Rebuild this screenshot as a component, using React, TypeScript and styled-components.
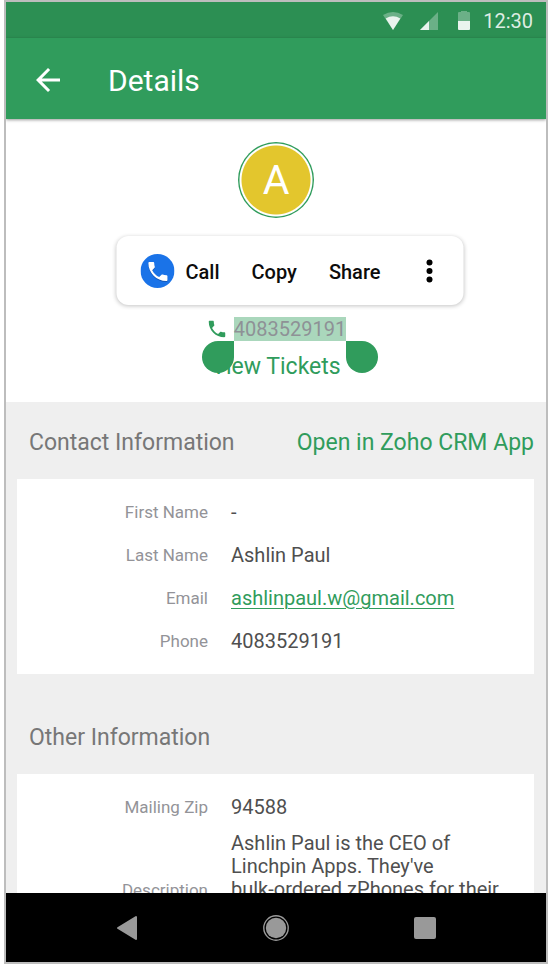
import React from "react";
import styled, { createGlobalStyle } from "styled-components";

const green = "#309c5c";

const GlobalStyle = createGlobalStyle`
  * { box-sizing: border-box; }
  body {
    margin: 0;
    background: #fff;
    font-family: Roboto, "Liberation Sans", sans-serif;
  }
  button {
    font: inherit;
    color: inherit;
    background: none;
    border: 0;
    padding: 0;
    cursor: pointer;
  }
  svg { display: block; }
`;

const Screen = styled.div`
  display: flex;
  flex-direction: column;
  height: calc(100vh - 2px);
  margin: 0 2px 2px 4px;
  border: 2px solid #bdbdbd;
  overflow: hidden;
`;

const StatusBar = styled.div`
  flex: none;
  display: flex;
  align-items: center;
  justify-content: flex-end;
  height: 36px;
  padding: 2px 13px 0 0;
  background: #2c8f53;
  color: rgba(255, 255, 255, 0.85);
  font-size: 20px;
`;

const StatusIcons = styled.div`
  display: flex;
  gap: 17px;
  margin-right: 10px;
`;

const AppBar = styled.header`
  flex: none;
  position: relative;
  z-index: 1;
  display: flex;
  align-items: center;
  gap: 42px;
  height: 81px;
  padding: 3px 24px 0;
  background: ${green};
  color: #fff;
  box-shadow: 0 1px 3px rgba(0, 0, 0, 0.4);
`;

const AppTitle = styled.h1`
  margin: 0;
  font-size: 30px;
  font-weight: 400;
`;

const Content = styled.main`
  flex: 1;
  min-height: 0;
  overflow: hidden;
  background: #efefef;
`;

const Profile = styled.section`
  display: flex;
  flex-direction: column;
  align-items: center;
  height: 283px;
  padding-top: 23px;
  background: #fff;
`;

const Avatar = styled.div`
  flex: none;
  display: grid;
  place-items: center;
  width: 76px;
  height: 76px;
  margin-bottom: 99px;
  border-radius: 50%;
  background: radial-gradient(circle, #e3c62d 34px, #fff 35px, #fff 36px, ${green} 37px);
  color: #fff;
  font-size: 41px;
`;

const PhoneRow = styled.div`
  display: flex;
  align-items: center;
  gap: 6px;
`;

const Selection = styled.div`
  position: relative;
  background: #aad7bc;
  color: #8e9196;
  font-size: 20px;
  line-height: 24px;
`;

const Handle = styled.span<{ $side: "left" | "right" }>`
  position: absolute;
  z-index: 1;
  top: 100%;
  ${(p) => (p.$side === "left" ? "right" : "left")}: 100%;
  width: 32px;
  height: 32px;
  border-radius: ${(p) => (p.$side === "left" ? "50% 0 50% 50%" : "0 50% 50% 50%")};
  background: ${green};
`;

const ActionPopup = styled.div`
  position: absolute;
  bottom: calc(100% + 12px);
  left: 50%;
  transform: translateX(-50%);
  display: flex;
  align-items: center;
  gap: 32px;
  height: 69px;
  padding: 0 17px 0 24px;
  border-radius: 12px;
  background: #fff;
  box-shadow: 0 1px 4px rgba(0, 0, 0, 0.24);
`;

const ActionButton = styled.button`
  display: flex;
  align-items: center;
  gap: 11px;
  color: #0c0c0c;
  font-size: 20px;
  font-weight: 500;
`;

const ActionText = styled.span`
  padding-top: 2px;
`;

const TicketsButton = styled.button`
  margin-top: 11px;
  color: ${green};
  font-size: 23px;
  line-height: 30px;
`;

const SectionHeader = styled.div`
  display: flex;
  align-items: center;
  justify-content: space-between;
  height: 77px;
  padding: 4px 12px 0 23px;
`;

const SectionTitle = styled.h2`
  margin: 0;
  color: #777;
  font-size: 23px;
  font-weight: 400;
`;

const SectionLink = styled.a`
  color: ${green};
  font-size: 23px;
  text-decoration: none;
`;

const Card = styled.dl`
  margin: 0 12px 23px 11px;
  padding: 12px 0 11px;
  background: #fff;
`;

const Field = styled.div<{ $multiline?: boolean }>`
  display: grid;
  grid-template-columns: 191px 1fr;
  column-gap: 23px;
  align-items: ${(p) => (p.$multiline ? "last baseline" : "center")};
  min-height: 43px;
  padding: ${(p) => (p.$multiline ? "3px 20px 0 0" : "0 20px 0 0")};
`;

const Label = styled.dt`
  padding-bottom: 1px;
  color: #939398;
  font-size: 17px;
  text-align: right;
`;

const Value = styled.dd`
  margin: 0;
  color: #4f4f4f;
  font-size: 20px;
  line-height: 23px;
  white-space: pre-line;
  a {
    color: ${green};
    text-decoration-thickness: 1px;
    text-underline-offset: 3px;
  }
`;

const NavBar = styled.nav`
  flex: none;
  display: flex;
  height: 69px;
  padding: 0 47px;
  background: #000;
`;

const NavButton = styled.button`
  flex: 1;
  display: grid;
  place-items: center;
`;

const handsetPath =
  "M6.62 10.79c1.44 2.83 3.76 5.14 6.59 6.59l2.2-2.2c.27-.27.67-.36 1.02-.24 1.12.37 2.33.57 3.57.57.55 0 1 .45 1 1V20c0 .55-.45 1-1 1-9.39 0-17-7.61-17-17 0-.55.45-1 1-1h3.5c.55 0 1 .45 1 1 0 1.25.2 2.45.57 3.57.11.35.03.74-.25 1.02l-2.2 2.2z";

const WifiIcon = () => (
  <svg width="20" height="20" viewBox="0 0 20 20" fill="#fff">
    <path opacity=".3" d="M0 4Q10-2 20 4L10 19Z" />
    <path opacity=".85" d="M2.7 7.6Q10 3 17.3 7.6L10 19Z" />
  </svg>
);

const SignalIcon = () => (
  <svg width="18" height="20" viewBox="0 0 18 20" fill="#fff">
    <path opacity=".3" d="M18 1V19H0Z" />
    <path opacity=".85" d="M9 10V19H0Z" />
  </svg>
);

const BatteryIcon = () => (
  <svg width="18" height="20" viewBox="0 0 18 20" fill="#fff">
    <path opacity=".3" d="M3 2Q3 1 4 1H6V0H12V1H14Q15 1 15 2V10H3Z" />
    <path opacity=".9" d="M3 10H15V18Q15 19 14 19H4Q3 19 3 18Z" />
  </svg>
);

const DialerIcon = () => (
  <svg width="34" height="34" viewBox="0 0 34 34">
    <circle cx="17" cy="17" r="17" fill="#1a73e8" />
    <g transform="translate(4.7 4.7) scale(1.06)">
      <path d={handsetPath} fill="#1558b8" transform="translate(0 1)" />
      <path d={handsetPath} fill="#fff" />
    </g>
  </svg>
);

const contactFields = [
  { label: "First Name", value: "-" },
  { label: "Last Name", value: "Ashlin Paul" },
  { label: "Email", value: "ashlinpaul.w@gmail.com", href: "mailto:ashlinpaul.w@gmail.com" },
  { label: "Phone", value: "4083529191" },
];

const otherFields = [
  { label: "Mailing Zip", value: "94588" },
  {
    label: "Description",
    value: "Ashlin Paul is the CEO of Linchpin Apps. They've\nbulk-ordered zPhones for their",
    multiline: true,
  },
];

type FieldData = { label: string; value: string; href?: string; multiline?: boolean };

const FieldCard = ({ fields }: { fields: FieldData[] }) => (
  <Card>
    {fields.map((f) => (
      <Field key={f.label} $multiline={f.multiline}>
        <Label>{f.label}</Label>
        <Value>{f.href ? <a href={f.href}>{f.value}</a> : f.value}</Value>
      </Field>
    ))}
  </Card>
);

export default function App() {
  return (
    <>
      <GlobalStyle />
      <Screen>
        <StatusBar>
          <StatusIcons>
            <WifiIcon />
            <SignalIcon />
            <BatteryIcon />
          </StatusIcons>
          <time>12:30</time>
        </StatusBar>
        <AppBar>
          <button aria-label="Back">
            <svg width="36" height="36" viewBox="0 0 24 24" fill="#fff">
              <path d="M20 11H7.83l5.59-5.59L12 4l-8 8 8 8 1.41-1.41L7.83 13H20z" />
            </svg>
          </button>
          <AppTitle>Details</AppTitle>
        </AppBar>
        <Content>
          <Profile>
            <Avatar>A</Avatar>
            <PhoneRow>
              <svg width="22" height="22" viewBox="0 0 24 24" fill={green}>
                <path d={handsetPath} />
              </svg>
              <Selection>
                4083529191
                <Handle $side="left" />
                <Handle $side="right" />
                <ActionPopup>
                  <ActionButton>
                    <DialerIcon />
                    <ActionText>Call</ActionText>
                  </ActionButton>
                  <ActionButton>
                    <ActionText>Copy</ActionText>
                  </ActionButton>
                  <ActionButton>
                    <ActionText>Share</ActionText>
                  </ActionButton>
                  <ActionButton aria-label="More options">
                    <svg width="34" height="34" viewBox="0 0 34 34">
                      <circle cx="17" cy="8.5" r="3" />
                      <circle cx="17" cy="17" r="3" />
                      <circle cx="17" cy="25.5" r="3" />
                    </svg>
                  </ActionButton>
                </ActionPopup>
              </Selection>
            </PhoneRow>
            <TicketsButton>View Tickets</TicketsButton>
          </Profile>
          <section>
            <SectionHeader>
              <SectionTitle>Contact Information</SectionTitle>
              <SectionLink href="#crm">Open in Zoho CRM App</SectionLink>
            </SectionHeader>
            <FieldCard fields={contactFields} />
          </section>
          <section>
            <SectionHeader>
              <SectionTitle>Other Information</SectionTitle>
            </SectionHeader>
            <FieldCard fields={otherFields} />
          </section>
        </Content>
        <NavBar>
          <NavButton aria-label="Back">
            <svg width="22" height="26" viewBox="0 0 22 26">
              <path d="M2 13L20 2V24Z" fill="#999" stroke="#999" strokeWidth="2" strokeLinejoin="round" />
            </svg>
          </NavButton>
          <NavButton aria-label="Home">
            <svg width="26" height="26" viewBox="0 0 26 26">
              <circle cx="13" cy="13" r="12.2" fill="none" stroke="#999" strokeWidth="1.4" />
              <circle cx="13" cy="13" r="10.2" fill="#999" />
            </svg>
          </NavButton>
          <NavButton aria-label="Recent apps">
            <svg width="22" height="22" viewBox="0 0 22 22">
              <rect width="22" height="22" rx="2" fill="#999" />
            </svg>
          </NavButton>
        </NavBar>
      </Screen>
    </>
  );
}
